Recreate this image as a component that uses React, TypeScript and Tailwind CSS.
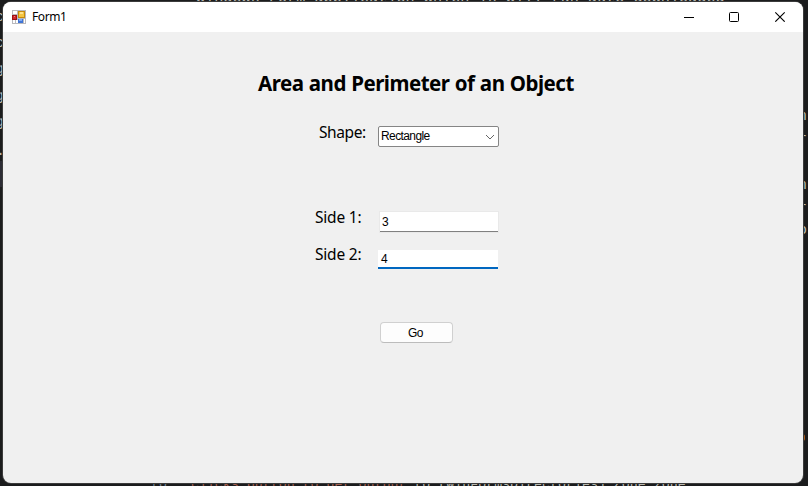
import React from 'react';

function FormIcon() {
  return (
    <svg width="14" height="14" viewBox="0 0 14 14" shapeRendering="crispEdges" className="shrink-0">
      <rect width="14" height="14" fill="#b9b9bd" />
      <rect x="1" y="1" width="4" height="3" fill="#fff" />
      <rect x="1" y="10" width="2" height="3" fill="#fff" />
      <rect x="4" y="10" width="2" height="3" fill="#fff" />
      <rect x="12" y="9" width="1" height="4" fill="#fff" />
      <rect x="0" y="5" width="5" height="5" fill="#9c1216" />
      <rect x="1" y="6" width="3" height="3" fill="#d0282c" />
      <rect x="2" y="6" width="1" height="1" fill="#f08080" />
      <rect x="6" y="1" width="7" height="7" fill="#c78a0c" />
      <rect x="7" y="2" width="5" height="5" fill="#f5c542" />
      <rect x="8" y="2" width="3" height="2" fill="#ffe28a" />
      <rect x="6" y="9" width="5" height="4" fill="#3f74d6" />
      <rect x="7" y="9" width="3" height="2" fill="#82acf2" />
    </svg>
  );
}

const edgeLetters = [
  { c: 'c', side: 'left-[-5px]', top: 'top-[8px]' },
  { c: 'c', side: 'left-[-5px]', top: 'top-[34px]' },
  { c: 'g', side: 'left-[-5px]', top: 'top-[60px]' },
  { c: 'g', side: 'left-[-5px]', top: 'top-[87px]' },
  { c: 'g', side: 'left-[-5px]', top: 'top-[113px]' },
  { c: '.', side: 'left-[-4px]', top: 'top-[142px]' },
  { c: 'n', side: 'left-[798px]', top: 'top-[107px]' },
  { c: 'r', side: 'left-[798px]', top: 'top-[130px]' },
  { c: 'n', side: 'left-[798px]', top: 'top-[176px]' },
  { c: 'r', side: 'left-[798px]', top: 'top-[199px]' },
  { c: 'o', side: 'left-[798px]', top: 'top-[221px]' },
];

function Backdrop() {
  return (
    <div className="absolute inset-0 overflow-hidden bg-[#1b1c1d] font-['Liberation_Mono',monospace] text-[15px] leading-[20px] whitespace-pre text-[#b8b8b0]">
      <div className="absolute top-[161px] left-0 h-[26px] w-[3px] bg-[#2c2c34]" />
      {edgeLetters.map((l, i) => (
        <span key={i} className={`absolute ${l.side} ${l.top}`}>{l.c}</span>
      ))}
      <span className="absolute top-[-12px] left-[196px] text-[15.2px]">Windows Form application which is will run auto downloaded</span>
      <span className="absolute top-[475px] left-[151px] text-[13.3px]">
        <span className="text-[#718191]">to   </span>
        <span className="text-[#a35f50]">clicks button to get output </span>
        to (WinFormsDirectories) Zone.zone;
      </span>
      <span className="absolute top-[434px] left-[800px] h-[7px] w-[5px] rounded-full bg-[#a85a1c]" />
    </div>
  );
}

function TitleBar() {
  return (
    <header className="flex h-[30px] shrink-0 items-center bg-white pr-[17px] pl-[9px]">
      <FormIcon />
      <span className="ml-[6px] text-[12px] leading-[16px] tracking-[-0.4px]">Form1</span>
      <svg width="102" height="12" viewBox="0 0 102 12" fill="none" stroke="#000" className="ml-auto -mt-[2px]">
        <path d="M0 7.5H10" shapeRendering="crispEdges" />
        <rect x="45.5" y="2.5" width="9" height="9" rx="1" />
        <path d="M91.3 2.3L100.7 11.7M100.7 2.3L91.3 11.7" strokeWidth="1.1" />
      </svg>
    </header>
  );
}

export default function App() {
  return (
    <div className="relative h-[486px] w-[808px] overflow-hidden font-['Noto_Sans',sans-serif] text-black">
      <Backdrop />
      <div className="absolute top-[2px] left-[3px] flex h-[481px] w-[800px] flex-col overflow-hidden rounded-[8px] bg-[#f0f0f0] shadow-[0_0_0_1px_#3b3b3b]">
        <TitleBar />
        <main className="flex flex-col items-start">
          <h1 className="mt-[35px] ml-[255px] h-[32px] text-[20.5px] leading-[32px] font-bold tracking-[-0.5px] [word-spacing:0.5px] whitespace-nowrap">
            Area and Perimeter of an Object
          </h1>
          <div className="mt-[27px] flex h-[21px] pl-[316px]">
            <label className="-mt-[6px] w-[59px] text-[15.5px] leading-[24px] tracking-[-0.4px] whitespace-nowrap">Shape:</label>
            <div className="flex w-[121px] items-center justify-between rounded-[2px] border border-[#858585] bg-white pr-[3px] pl-[2px] font-['Liberation_Sans',sans-serif] text-[12px] leading-[18px]">
              <span className="-mt-[2px] tracking-[-0.6px]">Rectangle</span>
              <svg width="10" height="6" viewBox="0 0 10 6" fill="none" stroke="#666"><path d="M1 1L5 5L9 1" /></svg>
            </div>
          </div>
          <div className="mt-[65px] flex h-[20px] pl-[312px]">
            <label className="-mt-[7px] w-[65px] text-[15.5px] leading-[24px] tracking-[-0.2px] whitespace-nowrap">Side 1:</label>
            <div className="w-[118px] border-b border-[#808080] bg-white pl-[2px] font-['Liberation_Sans',sans-serif] text-[12px] leading-[20px] shadow-[0_0_0_1px_#e9e9e9]">3</div>
          </div>
          <div className="mt-[18px] flex h-[19px] pl-[312px]">
            <label className="-mt-[8px] w-[63px] text-[15.5px] leading-[24px] tracking-[-0.2px] whitespace-nowrap">Side 2:</label>
            <div className="w-[120px] border-b-2 border-[#0067c0] bg-white pl-[3px] font-['Liberation_Sans',sans-serif] text-[12px] leading-[18px]">4</div>
          </div>
          <button className="mt-[53px] ml-[377px] h-[21px] w-[73px] rounded-[4px] border border-[#d0d0d0] border-b-[#bcbcbc] bg-[#fdfdfd] pt-[1px] pr-[2px] font-['Liberation_Sans',sans-serif] text-[12px] leading-[19px] tracking-[-0.5px]">Go</button>
        </main>
      </div>
    </div>
  );
}
